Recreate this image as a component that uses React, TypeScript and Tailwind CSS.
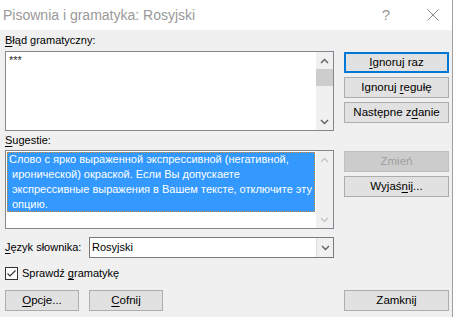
import React from 'react';

const U: React.FC<{ children: React.ReactNode }> = ({ children }) => <span className="underline underline-offset-2">{children}</span>;

const Btn: React.FC<{ children: React.ReactNode; primary?: boolean; disabled?: boolean; className?: string }> = ({
  children,
  primary,
  disabled,
  className = '',
}) => (
  <div
    className={`h-[21px] flex items-center justify-center text-[11.5px] leading-none ${
      primary
        ? 'border-2 border-[#0078d7] bg-[#e1e1e1] text-black'
        : disabled
        ? 'border border-[#bfbfbf] bg-[#cccccc] text-[#a0a0a0]'
        : 'border border-[#adadad] bg-[#e1e1e1] text-black'
    } ${className}`}
  >
    {children}
  </div>
);

const Chevron = ({ up, color }: { up?: boolean; color: string }) => (
  <svg width="9" height="6" viewBox="0 0 9 6">
    <path d={up ? 'M1 5 L4.5 1.5 L8 5' : 'M1 1 L4.5 4.5 L8 1'} fill="none" stroke={color} strokeWidth="1.4" />
  </svg>
);

const App: React.FC = () => {
  return (
    <div className="w-[457px] h-[317px] bg-white flex" style={{ fontFamily: '"Liberation Sans", Arial, sans-serif' }}>
      <div className="w-[453px] h-[317px] flex flex-col border-r border-[#a0a0a0] bg-[#f0f0f0]">
        {/* title bar */}
        <div className="h-[30px] bg-white flex items-center shrink-0">
          <div className="pl-[3px] text-[14px] text-[#999999] flex-1">Pisownia i gramatyka: Rosyjski</div>
          <div className="w-[20px] text-center text-[15px] text-[#999999] mr-[31px]">?</div>
          <svg width="12" height="12" viewBox="0 0 12 12" className="mr-[13px]">
            <path d="M0.5 0.5 L11.5 11.5 M11.5 0.5 L0.5 11.5" stroke="#8a8a8a" strokeWidth="1" />
          </svg>
        </div>

        <div className="flex pl-[5px] text-[11px] text-black">
          {/* left column */}
          <div className="w-[329px] flex flex-col">
            <div className="h-[21px] pt-[3px] leading-[15px]">
              <U>B</U>łąd gramatyczny:
            </div>
            <div className="h-[80px] border border-[#828790] bg-white flex">
              <div className="flex-1 pl-[3px] pt-[1px] leading-[15px] text-[#2b2b2b]">***</div>
              <div className="w-[17px] bg-[#f0f0f0] flex flex-col items-center">
                <div className="h-[17px] flex items-center justify-center">
                  <Chevron up color="#606060" />
                </div>
                <div className="w-[17px] h-[17px] bg-[#cdcdcd]" />
                <div className="flex-1" />
                <div className="h-[17px] flex items-center justify-center">
                  <Chevron color="#606060" />
                </div>
              </div>
            </div>
            <div className="h-[19px] pt-[2px] leading-[15px]">
              <U>S</U>ugestie:
            </div>
            <div className="h-[79px] border border-[#828790] bg-white flex">
              <div className="flex-1 p-[1px] flex flex-col">
                <div className="bg-[#3399ff] text-white leading-[15px] pl-[2px] h-[60px] whitespace-nowrap outline-1 outline-dotted outline-[#d08a3c] -outline-offset-1">
                  <div>Слово с ярко выраженной экспрессивной (негативной,</div>
                  <div className="pl-[3px]">иронической) окраской. Если Вы допускаете</div>
                  <div className="pl-[3px]">экспрессивные выражения в Вашем тексте, отключите эту</div>
                  <div className="pl-[3px]">опцию.</div>
                </div>
              </div>
              <div className="w-[17px] bg-[#f0f0f0] flex flex-col items-center">
                <div className="h-[17px] flex items-center justify-center">
                  <Chevron up color="#c5c5c5" />
                </div>
                <div className="flex-1" />
                <div className="h-[17px] flex items-center justify-center">
                  <Chevron color="#c5c5c5" />
                </div>
              </div>
            </div>
            <div className="h-[21px] mt-[8px] flex items-center">
              <div className="w-[84px]">
                <U>J</U>ęzyk słownika:
              </div>
              <div className="flex-1 h-[21px] border border-[#7a7a7a] bg-white flex">
                <div className="flex-1 pl-[2px] flex items-center">Rosyjski</div>
                <div className="w-[17px] border-l border-[#dadada] bg-[#f0f0f0] flex items-center justify-center">
                  <Chevron color="#606060" />
                </div>
              </div>
            </div>
            <div className="h-[13px] mt-[9px] flex items-center">
              <div className="w-[13px] h-[13px] border border-[#333333] bg-white flex items-center justify-center">
                <svg width="11" height="11" viewBox="0 0 11 11">
                  <path d="M1.5 5.5 L4 8 L9.5 2.5" fill="none" stroke="#333333" strokeWidth="1.2" />
                </svg>
              </div>
              <div className="ml-[4px]">
                Sprawdź <U>g</U>ramatykę
              </div>
            </div>
          </div>

          {/* right column */}
          <div className="ml-[10px] w-[105px] flex flex-col pt-[22px]">
            <Btn primary>
              <span>
                <U>I</U>gnoruj raz
              </span>
            </Btn>
            <Btn className="mt-[4px]">
              <span>
                Ignoruj <U>r</U>egułę
              </span>
            </Btn>
            <Btn className="mt-[4px]">
              <span>
                Następne z<U>d</U>anie
              </span>
            </Btn>
            <Btn disabled className="mt-[28px]">
              Zmień
            </Btn>
            <Btn className="mt-[4px]">
              <span>
                Wyjaś<U>n</U>ij...
              </span>
            </Btn>
          </div>
        </div>

        {/* bottom buttons */}
        <div className="flex pl-[5px] mt-[10px]">
          <Btn className="w-[74px]">
            <span>
              <U>O</U>pcje...
            </span>
          </Btn>
          <Btn className="w-[74px] ml-[10px]">
            <span>
              <U>C</U>ofnij
            </span>
          </Btn>
          <Btn className="w-[105px] ml-[181px]">Zamknij</Btn>
        </div>
      </div>
    </div>
  );
};

export default App;
